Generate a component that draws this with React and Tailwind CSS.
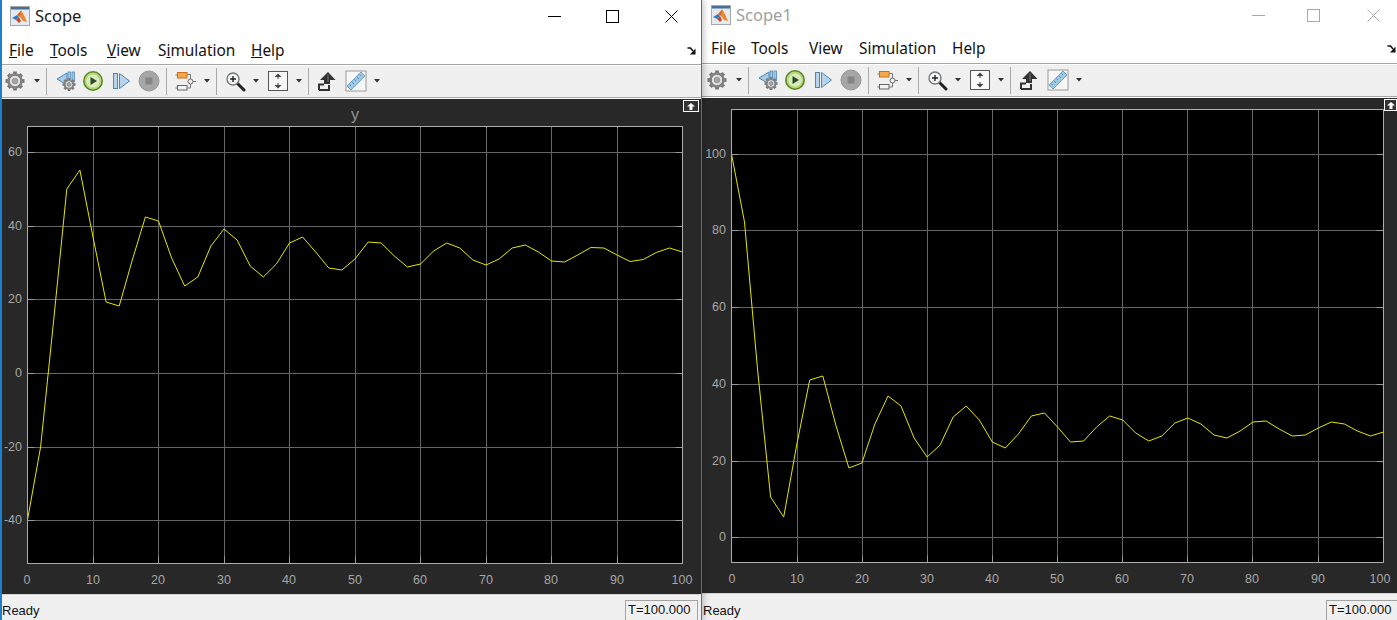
import React from "react";

const LEFT_Y = [520,447,320,189,170,237,302,306,260,217,221,258,286,277,246,229,240,266,277,264,243,237,252,268,270,259,242,243,256,267,264,251,243,248,260,265,259,248,245,252,261,262,255,247.5,248,255,261.5,259.5,252.5,248,252];
const RIGHT_Y = [154,222,370,497,517,445,380,376,425,468,463,424,396,406,438,457,445,417,406,420,442,448,434,416,413,427,442,441,427,416,420,433,441,436,423,418,424,435,438,431,422,421,429,436,435,428,422,424,431,436,432];

function Logo() {
  return (
    <svg width="20" height="20" viewBox="0 0 20 20" className="shrink-0">
      <rect x="0.5" y="0.5" width="19" height="19" fill="#e6e9ed" stroke="#a3a8ad" />
      <rect x="1" y="1" width="18" height="2.5" fill="#46709a" />
      <polygon points="2,12 7,9 9,11 6,14" fill="#2f7fc0" />
      <polygon points="7,9 11,4.5 13,8 10,11" fill="#d9622b" />
      <polygon points="11,4.5 14,9 17,16 13,15 10,11" fill="#e98a2e" />
      <polygon points="6,14 9,11 11,15 9,17" fill="#c9462a" />
    </svg>
  );
}

function Caret() {
  return (
    <svg width="6" height="4" viewBox="0 0 6 4" className="shrink-0">
      <polygon points="0,0 6,0 3,3.5" fill="#333" />
    </svg>
  );
}

function Sep({ className }) {
  return <div className={`w-px h-[27px] shrink-0 bg-[#a9a9a9] ${className}`} />;
}

function GearShape({ cx, cy, r }) {
  const teeth = [0, 45, 90, 135];
  return (
    <g>
      {teeth.map((a) => (
        <rect key={a} x={cx - r * 0.2} y={cy - r} width={r * 0.4} height={2 * r} fill="#777777" transform={`rotate(${a} ${cx} ${cy})`} />
      ))}
      <circle cx={cx} cy={cy} r={r * 0.82} fill="#858585" />
      <circle cx={cx} cy={cy} r={r * 0.6} fill="#e4e4e4" stroke="#6f6f6f" strokeWidth="0.8" />
      <circle cx={cx} cy={cy} r={r * 0.3} fill="#a8a8a8" stroke="#777777" strokeWidth="0.6" />
    </g>
  );
}

function Gear() {
  return (
    <svg width="20" height="20" viewBox="0 0 20 20" className="shrink-0">
      <GearShape cx={10} cy={10} r={9.5} />
    </svg>
  );
}

function Back() {
  return (
    <svg width="22" height="22" viewBox="0 0 22 22" className="shrink-0">
      <rect x="13" y="2" width="2.4" height="10" fill="#a9cbe6" stroke="#4d86b8" strokeWidth="0.8" />
      <rect x="17" y="2" width="2.4" height="10" fill="#a9cbe6" stroke="#4d86b8" strokeWidth="0.8" />
      <polygon points="2,9 12,3 12,15" fill="#a9cbe6" stroke="#4d86b8" />
      <GearShape cx={14} cy={14.5} r={6.5} />
    </svg>
  );
}

function Play() {
  return (
    <svg width="22" height="22" viewBox="0 0 22 22" className="shrink-0">
      <circle cx="11" cy="11" r="9.2" fill="#b5d77b" stroke="#5a8a22" strokeWidth="1.6" />
      <circle cx="11" cy="11" r="6.6" fill="#dcebbd" />
      <polygon points="8.5,7 15,11 8.5,15" fill="#2f4a22" />
    </svg>
  );
}

function Step() {
  return (
    <svg width="22" height="22" viewBox="0 0 22 22" className="shrink-0">
      <rect x="3.5" y="3.5" width="4" height="15" fill="#b8d4ec" stroke="#4d86b8" />
      <polygon points="9.5,3.5 19.5,11 9.5,18.5" fill="#b8d4ec" stroke="#4d86b8" />
    </svg>
  );
}

function Stop() {
  return (
    <svg width="22" height="22" viewBox="0 0 22 22" className="shrink-0">
      <circle cx="11" cy="11" r="10" fill="#a6a6a6" stroke="#9a9a9a" />
      <rect x="7.5" y="7.5" width="7" height="7" fill="#858585" />
    </svg>
  );
}

function Blocks() {
  return (
    <svg width="22" height="22" viewBox="0 0 22 22" className="shrink-0">
      <path d="M12 4.5H15.5V9M12 18H15.5V14M18 11.5H21M2 5H0.5M2 18H0.5" fill="none" stroke="#777" strokeWidth="1" />
      <rect x="2.5" y="2.5" width="9.5" height="5.5" fill="#f5a94e" stroke="#c9701a" />
      <rect x="2.5" y="15.5" width="9.5" height="4.5" fill="#f4f4f4" stroke="#666" />
      <circle cx="15.5" cy="11.5" r="2.5" fill="#eeeeee" stroke="#666" />
    </svg>
  );
}

function Magnifier() {
  return (
    <svg width="22" height="22" viewBox="0 0 22 22" className="shrink-0">
      <path d="M13.5 13.5L20 20" stroke="#222" strokeWidth="3" strokeLinecap="round" />
      <circle cx="9" cy="9" r="6" fill="#f4f8fb" stroke="#777" strokeWidth="1.4" />
      <path d="M6 9H12M9 6V12" stroke="#222" strokeWidth="1.4" />
    </svg>
  );
}

function Fit() {
  return (
    <svg width="22" height="22" viewBox="0 0 22 22" className="shrink-0">
      <rect x="1.5" y="1.5" width="19" height="19" fill="#f7f7f7" stroke="#555" />
      <polygon points="11,3.5 14.5,7 7.5,7" fill="#444" />
      <rect x="10" y="7" width="2" height="2" fill="#999" />
      <polygon points="11,18.5 14.5,15 7.5,15" fill="#444" />
      <rect x="10" y="13" width="2" height="2" fill="#999" />
    </svg>
  );
}

function StepUp() {
  return (
    <svg width="22" height="22" viewBox="0 0 22 22" className="shrink-0">
      <path d="M4 20V14.5H9M4 20H14V15" fill="#f0f0f0" stroke="#333" strokeWidth="2" />
      <polygon points="13,2 20.5,10 15,10 15,14 9,14 9,10 5,10" fill="#333" />
      <path d="M13 4.5V12" stroke="#777" strokeWidth="1" />
    </svg>
  );
}

function Ruler() {
  return (
    <svg width="22" height="22" viewBox="0 0 22 22" className="shrink-0">
      <rect x="1" y="1" width="20" height="20" fill="#f7f7f7" stroke="#9a9a9a" />
      <polygon points="16,2 20,6 6,20 2,16" fill="#9cc9e6" stroke="#5b92b8" strokeWidth="0.8" />
      <path d="M14.5 4.5L16 6M12 7L14 9M9.5 9.5L11 11M7 12L9 14M4.5 14.5L6 16" stroke="#4d7d9f" strokeWidth="0.8" />
    </svg>
  );
}

function Toolbar({ pad }) {
  return (
    <div className={`h-[31px] shrink-0 bg-[#f0f0f0] flex items-center ${pad}`}>
      <Gear />
      <div className="ml-[9px]"><Caret /></div>
      <Sep className="ml-[6px]" />
      <div className="ml-[8px]"><Back /></div>
      <div className="ml-[5px]"><Play /></div>
      <div className="ml-[6px]"><Step /></div>
      <div className="ml-[6px]"><Stop /></div>
      <Sep className="ml-[6px]" />
      <div className="ml-[8px]"><Blocks /></div>
      <div className="ml-[7px]"><Caret /></div>
      <Sep className="ml-[6px]" />
      <div className="ml-[7px]"><Magnifier /></div>
      <div className="ml-[7px]"><Caret /></div>
      <div className="ml-[8px]"><Fit /></div>
      <div className="ml-[7px]"><Caret /></div>
      <Sep className="ml-[6px]" />
      <div className="ml-[6px]"><StepUp /></div>
      <div className="ml-[8px]"><Ruler /></div>
      <div className="ml-[7px]"><Caret /></div>
    </div>
  );
}

function Minimize({ color }) {
  return (
    <svg width="13" height="13" viewBox="0 0 13 13" className="shrink-0">
      <path d="M0 6.5H13" stroke={color} strokeWidth="1" />
    </svg>
  );
}
function Maximize({ color }) {
  return (
    <svg width="13" height="13" viewBox="0 0 13 13" className="shrink-0">
      <rect x="0.5" y="0.5" width="12" height="12" fill="none" stroke={color} strokeWidth="1" />
    </svg>
  );
}
function Close({ color }) {
  return (
    <svg width="13" height="13" viewBox="0 0 13 13" className="shrink-0">
      <path d="M0.5 0.5L12.5 12.5M12.5 0.5L0.5 12.5" stroke={color} strokeWidth="1" />
    </svg>
  );
}

function CornerArrow() {
  return (
    <svg width="9" height="8" viewBox="0 0 9 8" className="shrink-0">
      <path d="M0.5 1H3.5L6 4" fill="none" stroke="#111" strokeWidth="1.6" />
      <polygon points="8.5,1.5 8.5,7.5 3,7.5" fill="#111" />
    </svg>
  );
}

function Collapse({ className }) {
  return (
    <div className={`absolute top-[1px] h-[12px] border border-white bg-[#333333] flex items-center justify-center ${className}`}>
      <svg width="8" height="7" viewBox="0 0 8 7">
        <polygon points="4,0 8,3.5 5.5,3.5 5.5,7 2.5,7 2.5,3.5 0,3.5" fill="#ffffff" />
      </svg>
    </div>
  );
}

function Plot({ vb, w, h, box, gridX, gridY, xLabels, yLabels, labelEnd, xBase, series, title }) {
  const { x0, x1, y0, y1 } = box;
  const pts = series.map((y, i) => `${(x0 + ((x1 - x0) * i) / 50).toFixed(1)},${y}`).join(" ");
  return (
    <svg width={w} height={h} viewBox={vb} className="block font-['Liberation_Sans',Arial,sans-serif]">
      <rect x={x0} y={y0} width={x1 - x0} height={y1 - y0} fill="#000000" />
      {gridX.map((x) => (
        <path key={x} d={`M${x} ${y0}V${y1}`} stroke="#666666" strokeWidth="1" />
      ))}
      {gridX.map((x) => (
        <path key={`t${x}`} d={`M${x} ${y1 - 7}V${y1}`} stroke="#9a9a9a" strokeWidth="1" />
      ))}
      {gridY.map((y) => (
        <path key={y} d={`M${x0} ${y}H${x1}`} stroke="#666666" strokeWidth="1" />
      ))}
      {gridY.map((y) => (
        <path key={`t${y}`} d={`M${x0} ${y}H${x0 + 7}M${x1 - 7} ${y}H${x1}`} stroke="#9a9a9a" strokeWidth="1" />
      ))}
      <polyline points={pts} fill="none" stroke="#e6e600" strokeWidth="1" />
      <rect x={x0} y={y0} width={x1 - x0} height={y1 - y0} fill="none" stroke="#adadad" strokeWidth="1" />
      {xLabels.map(([x, t]) => (
        <text key={t} x={x} y={xBase} textAnchor="middle" fontSize="12.5" fill="#a6a6a6">{t}</text>
      ))}
      {yLabels.map(([y, t]) => (
        <text key={t} x={labelEnd} y={y + 4} textAnchor="end" fontSize="12.5" fill="#a6a6a6">{t}</text>
      ))}
      {title ? <text x={355} y={120} textAnchor="middle" fontSize="16" fill="#969696">{title}</text> : null}
    </svg>
  );
}

const Menu = ({ children, className }) => (
  <span className={`block shrink-0 ${className}`}>{children}</span>
);

export default function App() {
  const sharedFont = "font-['Noto_Sans',sans-serif]";
  const l = [93.5, 158.5, 224.5, 289.5, 355.5, 420.5, 486.5, 551.5, 617.5];
  const r = [797.5, 862.5, 927.5, 992.5, 1057.5, 1122.5, 1187.5, 1252.5, 1318.5];
  return (
    <div className={`w-[1397px] h-[620px] flex overflow-hidden bg-white ${sharedFont}`}>
      {/* Scope */}
      <div className="relative z-10 w-[702px] shrink-0 h-full flex flex-col border-l-2 border-r border-[#1c7fd0] bg-white shadow-[2px_0_6px_rgba(0,0,0,0.22)]">
        <div className="h-[34px] shrink-0 flex items-center pl-[8px] pr-[23px] pb-[2px] bg-white">
          <Logo />
          <span className="ml-[5px] text-[16.5px] leading-none text-[#1a1a1a]">Scope</span>
          <div className="ml-auto flex items-center">
            <Minimize color="#000" />
            <div className="ml-[45px]"><Maximize color="#000" /></div>
            <div className="ml-[46px]"><Close color="#000" /></div>
          </div>
        </div>
        <div className="h-[30px] shrink-0 flex items-center pl-[7px] pr-[5px] pt-[3px] text-[15.4px] text-[#111] bg-white">
          <Menu className="w-[41px]"><u>F</u>ile</Menu>
          <Menu className="w-[57px]"><u>T</u>ools</Menu>
          <Menu className="w-[51px]"><u>V</u>iew</Menu>
          <Menu className="w-[93px]">S<u>i</u>mulation</Menu>
          <Menu className="w-[45px]"><u>H</u>elp</Menu>
          <div className="ml-auto"><CornerArrow /></div>
        </div>
        <div className="h-px shrink-0 bg-[#a5a5a5]" />
        <div className="h-px shrink-0 bg-white" />
        <Toolbar pad="pl-[3px] pb-[1px]" />
        <div className="h-px shrink-0 bg-[#a5a5a5]" />
        <div className="h-px shrink-0 bg-white" />
        <div className="relative flex-1 bg-[#282828] overflow-hidden">
          <Plot
            vb="2 99 699 495"
            w={699}
            h={495}
            box={{ x0: 27.5, x1: 682.5, y0: 126.5, y1: 563.5 }}
            gridX={l}
            gridY={[152.5, 226.5, 299.5, 373.5, 447.5, 520.5]}
            xLabels={[[27, "0"], [93, "10"], [158, "20"], [224, "30"], [289, "40"], [355, "50"], [420, "60"], [486, "70"], [551, "80"], [617, "90"], [682, "100"]]}
            yLabels={[[152, "60"], [226, "40"], [299, "20"], [373, "0"], [447, "-20"], [520, "-40"]]}
            labelEnd={22}
            xBase={584}
            series={LEFT_Y}
            title="y"
          />
          <Collapse className="right-[2px] w-[16px]" />
        </div>
        <div className="h-[26px] shrink-0 bg-[#f0f0f0] border-t border-[#d4d4d4] flex items-start justify-between pr-[3px] font-['Liberation_Sans',Arial,sans-serif] text-[13px] text-[#111]">
          <span className="mt-[9px] leading-none">Ready</span>
          <div className="mt-[5px] w-[73px] h-[21px] border-t border-l border-r border-[#a3a3a3] pl-[2px] pt-[1px] flex items-start">
            <span className="leading-[16px]">T=100.000</span>
          </div>
        </div>
      </div>

      {/* Scope1 */}
      <div className="w-[695px] shrink-0 h-full flex flex-col bg-white">
        <div className="h-[33px] shrink-0 flex items-center pl-[9px] pr-[17px] pb-[3px] bg-white">
          <Logo />
          <span className="ml-[5px] text-[16.5px] leading-none text-[#a0a0a0]">Scope1</span>
          <div className="ml-auto flex items-center">
            <Minimize color="#a8a8a8" />
            <div className="ml-[42px]"><Maximize color="#a8a8a8" /></div>
            <div className="ml-[47px]"><Close color="#a8a8a8" /></div>
          </div>
        </div>
        <div className="h-[30px] shrink-0 flex items-center pl-[9px] pr-[1px] pt-[2px] text-[15.4px] text-[#111] bg-white">
          <Menu className="w-[40px]">File</Menu>
          <Menu className="w-[58px]">Tools</Menu>
          <Menu className="w-[50px]">View</Menu>
          <Menu className="w-[93px]">Simulation</Menu>
          <Menu className="w-[45px]">Help</Menu>
          <div className="ml-auto"><CornerArrow /></div>
        </div>
        <div className="h-px shrink-0 bg-[#a5a5a5]" />
        <div className="h-px shrink-0 bg-white" />
        <Toolbar pad="pl-[5px] pb-[1px]" />
        <div className="h-px shrink-0 bg-[#a5a5a5]" />
        <div className="h-px shrink-0 bg-white" />
        <div className="relative flex-1 bg-[#282828] overflow-hidden">
          <Plot
            vb="702 98 695 495"
            w={695}
            h={495}
            box={{ x0: 731.5, x1: 1383.5, y0: 109.5, y1: 562.5 }}
            gridX={r}
            gridY={[154.5, 230.5, 307.5, 384.5, 461.5, 537.5]}
            xLabels={[[732, "0"], [797, "10"], [862, "20"], [927, "30"], [992, "40"], [1057, "50"], [1122, "60"], [1187, "70"], [1252, "80"], [1318, "90"], [1380, "100"]]}
            yLabels={[[154, "100"], [230, "80"], [307, "60"], [384, "40"], [461, "20"], [537, "0"]]}
            labelEnd={726}
            xBase={583}
            series={RIGHT_Y}
          />
          <Collapse className="right-0 w-[13px]" />
        </div>
        <div className="h-[27px] shrink-0 bg-[#f0f0f0] border-t border-[#d4d4d4] flex items-start justify-between font-['Liberation_Sans',Arial,sans-serif] text-[13px] text-[#111]">
          <span className="ml-[1px] mt-[10px] leading-none">Ready</span>
          <div className="mt-[6px] w-[71px] h-[21px] border-t border-l border-[#a3a3a3] pl-[2px] pt-[1px] flex items-start">
            <span className="leading-[16px]">T=100.000</span>
          </div>
        </div>
      </div>
    </div>
  );
}
